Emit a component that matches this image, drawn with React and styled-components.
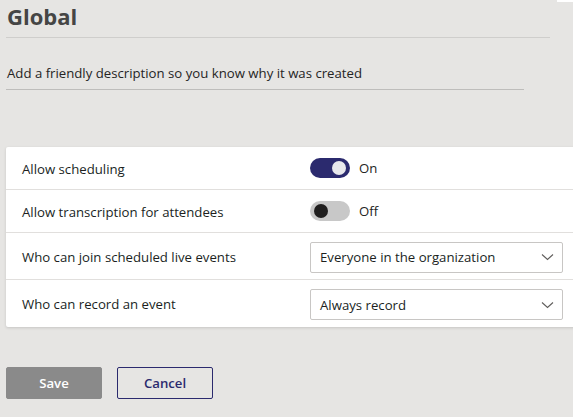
import styled, { createGlobalStyle } from 'styled-components'

const GlobalStyle = createGlobalStyle`
  html, body {
    margin: 0;
    padding: 0;
    background: #e6e5e3;
    font-family: "Open Sans", "Noto Sans", sans-serif;
    color: #252423;
  }
`;

const Page = styled.div`
  width: 573px;
  height: 417px;
  overflow: hidden;
  padding-left: 6px;
  box-sizing: border-box;
  position: relative;
`;

const Corner = styled.div`
  position: absolute;
  top: 0;
  right: 0;
  width: 16px;
  height: 2px;
  background: #ffffff;
`;

const Title = styled.h1`
  margin: 0;
  width: 544px;
  height: 38px;
  padding-left: 1px;
  font-size: 22px;
  line-height: 32px;
  font-weight: 700;
  color: #454545;
  border-bottom: 1px solid #cfcecc;
  box-sizing: border-box;
`;

const Description = styled.div`
  margin-top: 25px;
  width: 518px;
  height: 27px;
  padding-left: 1px;
  font-size: 13.2px;
  line-height: 20px;
  color: #252423;
  border-bottom: 1px solid #bebdbb;
  box-sizing: border-box;
`;

const Card = styled.div`
  margin-top: 57px;
  width: 620px;
  background: #ffffff;
  border-radius: 2px;
  box-shadow: 0 1px 3px rgba(0, 0, 0, 0.14);
`;

const Row = styled.div`
  display: grid;
  grid-template-columns: 288px 1fr;
  align-items: center;
  padding-left: 16px;
  height: ${p => p.$h}px;
  box-sizing: border-box;
  border-top: ${p => (p.$first ? 'none' : '1px solid #e1dfdd')};
  font-size: 13.2px;
`;

const Label = styled.span`
  color: #201f1e;
  padding-top: 1px;
`;

const ToggleWrap = styled.div`
  display: flex;
  align-items: center;
  gap: 9px;
`;

const Track = styled.div`
  width: 40px;
  height: 20px;
  border-radius: 10px;
  background: ${p => (p.$on ? '#2b2a6e' : '#c8c8c8')};
  display: flex;
  align-items: center;
  justify-content: ${p => (p.$on ? 'flex-end' : 'flex-start')};
  padding: 0 4px;
  box-sizing: border-box;
`;

const Knob = styled.div`
  width: 14px;
  height: 14px;
  border-radius: 50%;
  background: ${p => (p.$on ? '#e8e8ec' : '#201f1f')};
`;

const Select = styled.div`
  width: 253px;
  height: 31px;
  border: 1px solid #c8c6c4;
  border-radius: 2px;
  box-sizing: border-box;
  display: flex;
  align-items: center;
  justify-content: space-between;
  padding: 0 8px 0 9px;
  margin-top: ${p => p.$mt || 0}px;
  color: #201f1e;
`;

const Actions = styled.div`
  display: flex;
  gap: 15px;
  margin-top: 40px;
`;

const Button = styled.button`
  width: 96px;
  height: 32px;
  border-radius: 2px;
  font-family: "Open Sans", "Noto Sans", sans-serif;
  font-size: 13.2px;
  font-weight: 600;
  border: 1px solid ${p => (p.$primary ? '#8a8a8a' : '#2b2a6e')};
  background: ${p => (p.$primary ? '#8a8a8a' : 'transparent')};
  color: ${p => (p.$primary ? '#ffffff' : '#2b2a6e')};
  padding: 0;
`;

function Toggle({ on }) {
  return (
    <ToggleWrap>
      <Track $on={on}>
        <Knob $on={on} />
      </Track>
      <span>{on ? 'On' : 'Off'}</span>
    </ToggleWrap>
  );
}

function Chevron() {
  return (
    <svg width="13" height="8" viewBox="0 0 13 8">
      <path d="M1 1.5 L6.5 6.5 L12 1.5" fill="none" stroke="#605e5c" strokeWidth="1.1" />
    </svg>
  );
}

export default function App() {
  return (
    <>
      <GlobalStyle />
      <Page>
        <Corner />
        <Title>Global</Title>
        <Description>Add a friendly description so you know why it was created</Description>
        <Card>
          <Row $first $h={42}>
            <Label>Allow scheduling</Label>
            <Toggle on />
          </Row>
          <Row $h={43}>
            <Label>Allow transcription for attendees</Label>
            <Toggle on={false} />
          </Row>
          <Row $h={47}>
            <Label>Who can join scheduled live events</Label>
            <Select $mt={2}>
              <span>Everyone in the organization</span>
              <Chevron />
            </Select>
          </Row>
          <Row $h={48}>
            <Label>Who can record an event</Label>
            <Select $mt={2}>
              <span>Always record</span>
              <Chevron />
            </Select>
          </Row>
        </Card>
        <Actions>
          <Button $primary>Save</Button>
          <Button>Cancel</Button>
        </Actions>
      </Page>
    </>
  );
}
